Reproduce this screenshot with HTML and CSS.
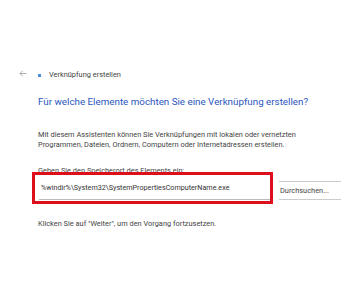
FILE: index.html
```html
<!DOCTYPE html>
<html>
<head>
    <meta charset="UTF-8">
    <title>Verknüpfung erstellen</title>
    <link rel="stylesheet" href="styles.css">
</head>
<body>
    <div class="wizard">
        <div class="top-bar">
            <svg class="back" width="8" height="7" viewBox="0 0 8 7"><path d="M7.5 3.5H1M3.8 0.7L1 3.5l2.8 2.8" fill="none" stroke="#999" stroke-width="0.8"/></svg>
            <span class="app-icon"></span>
            <span class="title">Verknüpfung erstellen</span>
        </div>
        <div class="content">
            <h1>Für welche Elemente möchten Sie eine Verknüpfung erstellen?</h1>
            <p class="intro">Mit diesem Assistenten können Sie Verknüpfungen mit lokalen oder vernetzten Programmen, Dateien, Ordnern, Computern oder Internetadressen erstellen.</p>
            <div class="field">
                <div class="label">Geben Sie den Speicherort des Elements ein:</div>
                <div class="field-row">
                    <div class="path-input">%windir%\System32\SystemPropertiesComputerName.exe</div>
                    <div class="browse">Durchsuchen...</div>
                </div>
                <div class="highlight"></div>
            </div>
            <p class="hint">Klicken Sie auf "Weiter", um den Vorgang fortzusetzen.</p>
        </div>
    </div>
</body>
</html>
```

FILE: styles.css
```css
body { margin: 0; background: #fff; font-family: Roboto, "Noto Sans", sans-serif; color: #444; }
.wizard { width: 350px; height: 300px; }
.top-bar { display: flex; align-items: center; padding: 66px 0 0 19px; height: 16px; font-size: 7.4px; }
.back { margin-right: 11px; margin-top: -2px; }
.app-icon { width: 3px; height: 3px; background: #4a8de0; margin-top: 3px; margin-right: 8px; }
.title { color: #444; }
.content { padding-left: 38px; }
h1 { margin: 13px 0 0; font-size: 9.8px; font-weight: normal; color: #2b56c0; line-height: 14px; }
.intro { margin: 21px 0 0; width: 280px; font-size: 7.4px; line-height: 10px; }
.field { position: relative; margin-top: 16px; }
.label { font-size: 7.4px; line-height: 10px; }
.field-row { display: flex; align-items: center; margin-top: 3px; }
.path-input { width: 229px; margin-left: 1px; height: 20px; line-height: 18px; padding-left: 2px; font-size: 7.2px; color: #333; border-bottom: 1px solid #bbb; }
.browse { margin-left: 9px; width: 61px; height: 17px; line-height: 17px; font-size: 7.4px; border-top: 1px solid #ccc; border-bottom: 1px solid #ccc; padding-left: 1px; margin-top: 2px; }
.highlight { position: absolute; left: -6px; top: 6px; width: 235px; height: 26px; border: 3px solid #dc0f1a; }
.hint { margin: 19px 0 0; font-size: 7.4px; line-height: 10px; }
```
